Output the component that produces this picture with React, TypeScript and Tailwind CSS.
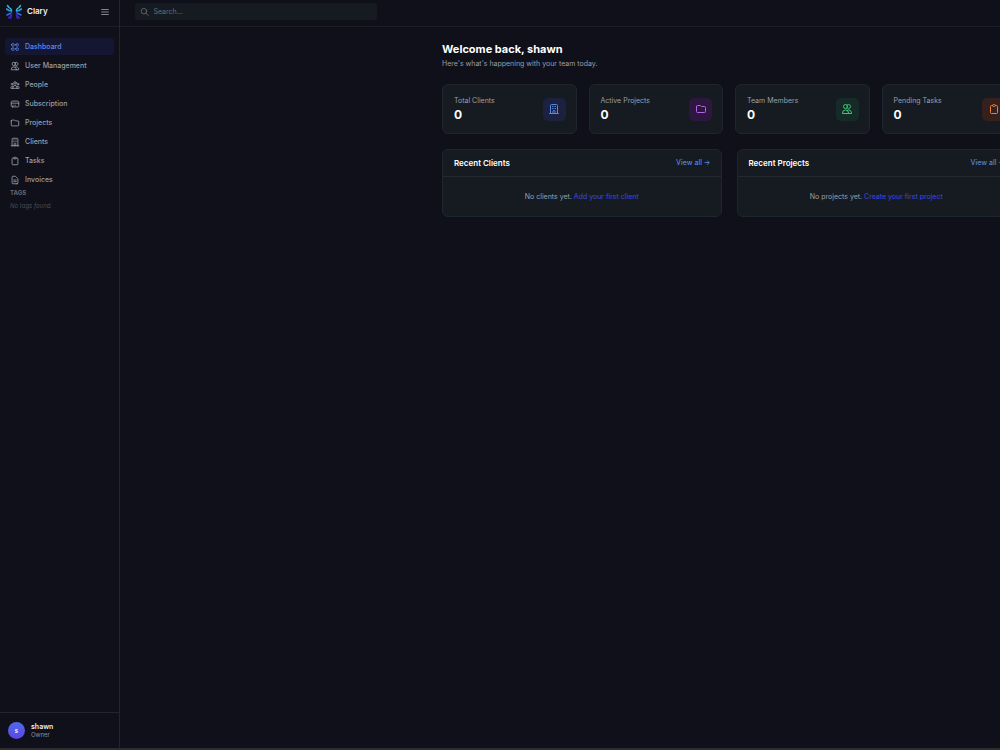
import type { ReactNode } from "react";
import type { IconType } from "react-icons";
import {
  HiOutlineClipboard,
  HiOutlineCreditCard,
  HiOutlineDocumentText,
  HiOutlineFolder,
  HiOutlineMenu,
  HiOutlineOfficeBuilding,
  HiOutlineSearch,
  HiOutlineUserGroup,
  HiOutlineUsers,
  HiOutlineViewGrid,
} from "react-icons/hi";

const navItems: { label: string; icon: IconType; active?: boolean }[] = [
  { label: "Dashboard", icon: HiOutlineViewGrid, active: true },
  { label: "User Management", icon: HiOutlineUsers },
  { label: "People", icon: HiOutlineUserGroup },
  { label: "Subscription", icon: HiOutlineCreditCard },
  { label: "Projects", icon: HiOutlineFolder },
  { label: "Clients", icon: HiOutlineOfficeBuilding },
  { label: "Tasks", icon: HiOutlineClipboard },
  { label: "Invoices", icon: HiOutlineDocumentText },
];

const stats: { label: string; value: number; icon: IconType; tone: string }[] = [
  {
    label: "Total Clients",
    value: 0,
    icon: HiOutlineOfficeBuilding,
    tone: "bg-[#1c2140] text-[#5688e0]",
  },
  {
    label: "Active Projects",
    value: 0,
    icon: HiOutlineFolder,
    tone: "bg-[#2d163f] text-[#b565e0]",
  },
  {
    label: "Team Members",
    value: 0,
    icon: HiOutlineUsers,
    tone: "bg-[#162b27] text-[#3fc67a]",
  },
  {
    label: "Pending Tasks",
    value: 0,
    icon: HiOutlineClipboard,
    tone: "bg-[#35201d] text-[#e5853a]",
  },
];

function Logo() {
  return (
    <svg className="h-4 w-4 shrink-0" viewBox="0 0 32 32" fill="none" aria-hidden="true">
      <g strokeWidth="3" strokeLinecap="round" strokeLinejoin="round">
        <path stroke="#35b8e0" d="M3 3l3 4 4 3 1 3M29 3l-3 4-4 3-1 3" />
        <path stroke="#2aa5dc" d="M1 10l5 3 5 1M31 10l-5 3-5 1" />
        <path stroke="#2f6fe6" d="M2 22l4-2 5-2M30 22l-4-2-5-2" />
        <path stroke="#3526c4" d="M5 28l4-4 2-5M9 29l2-6M27 28l-4-4-2-5M23 29l-2-6" />
      </g>
    </svg>
  );
}

function Sidebar() {
  return (
    <aside className="flex w-[120px] shrink-0 flex-col border-r border-[#23242d]">
      <div className="flex h-[27px] items-center border-b border-[#1d1e27] pb-[3px] pl-[6px] pr-[9px]">
        <Logo />
        <span className="ml-[5px] text-[8px] leading-[11px] font-semibold text-[#f0f1f4]">
          Clary
        </span>
        <button type="button" aria-label="Toggle menu" className="ml-auto text-[#9a9eaa]">
          <HiOutlineMenu className="h-[10px] w-[10px]" />
        </button>
      </div>
      <nav className="flex flex-col gap-[2px] px-[5px] pt-[11px]">
        {navItems.map(({ label, icon: Icon, active }) => (
          <a
            key={label}
            href="#"
            className={
              active
                ? "flex h-[17px] items-center gap-[5px] rounded-[3px] bg-[#151632] px-[5px] text-[7px] leading-[17px] font-medium text-[#5a8df0]"
                : "flex h-[17px] items-center gap-[5px] rounded-[3px] px-[5px] text-[7px] leading-[17px] font-medium text-[#9a9fab]"
            }
          >
            <Icon className="h-[10px] w-[10px]" />
            {label}
          </a>
        ))}
      </nav>
      <div className="px-[10px]">
        <h2 className="text-[6px] leading-[9px] font-bold text-[#646976]">TAGS</h2>
        <p className="mt-1 text-[6px] leading-[9px] text-[#474c58] italic">No tags found.</p>
      </div>
      <div className="mt-auto flex h-[36px] items-center gap-[6px] border-t border-[#23242d] px-2">
        <span className="flex h-[17px] w-[17px] items-center justify-center rounded-full bg-gradient-to-b from-[#4f68e8] to-[#5b45e5] text-[6px] font-semibold text-white">
          s
        </span>
        <div>
          <p className="text-[7px] leading-[8px] font-semibold text-[#eceef2]">shawn</p>
          <p className="text-[6px] leading-[8px] text-[#8b909c]">Owner</p>
        </div>
      </div>
    </aside>
  );
}

function Panel({ title, children }: { title: string; children: ReactNode }) {
  return (
    <section className="rounded-[6px] border border-[#1e262d] bg-[#161b21]">
      <div className="flex h-[27px] items-center justify-between border-b border-[#222930] pr-[10px] pl-[11px]">
        <h2 className="text-[8px] leading-[11px] font-semibold text-white">{title}</h2>
        <a href="#" className="text-[7px] leading-[10px] font-medium text-[#5585dc]">
          View all →
        </a>
      </div>
      <p className="py-[14px] text-center text-[7px] leading-[11px] text-[#9a9faa]">{children}</p>
    </section>
  );
}

export default function App() {
  return (
    <div className="flex h-screen flex-col overflow-hidden bg-[#0f1019] font-['Inter',sans-serif]">
      <div className="flex min-h-0 flex-1">
        <Sidebar />
        <div className="min-w-0 flex-1">
          <header className="flex h-[27px] items-center border-b border-[#1d1e27] pb-[3px] pl-[15px]">
            <label className="flex h-[17px] w-[242px] items-center gap-1 rounded-[3px] bg-[#161b21] px-[5px] text-[#6b717d]">
              <HiOutlineSearch className="h-[10px] w-[10px]" />
              <input
                type="search"
                aria-label="Search"
                placeholder="Search..."
                className="w-full bg-transparent text-[7px] leading-[17px] placeholder:text-[#666c78] focus:outline-none"
              />
            </label>
          </header>
          <main className="flex overflow-hidden pt-[15px] pl-[322px]">
            <div className="w-[574px] shrink-0">
              <h1 className="text-[11px] leading-[15px] font-bold text-white">
                Welcome back, shawn
              </h1>
              <p className="mt-[2px] text-[7px] leading-[10px] text-[#9a9faa]">
                Here's what's happening with your team today.
              </p>
              <div className="mt-[15px] grid grid-cols-4 gap-[12px]">
                {stats.map(({ label, value, icon: Icon, tone }) => (
                  <div
                    key={label}
                    className="flex h-[50px] items-center justify-between rounded-[6px] border border-[#1e262d] bg-[#161b21] pr-[10px] pl-[11px]"
                  >
                    <div>
                      <p className="text-[7px] leading-[10px] text-[#9a9faa]">{label}</p>
                      <p className="mt-px text-[12px] leading-[16px] font-bold text-white">
                        {value}
                      </p>
                    </div>
                    <span
                      className={`flex h-[23px] w-[23px] items-center justify-center rounded-[5px] ${tone}`}
                    >
                      <Icon className="h-[12px] w-[12px]" />
                    </span>
                  </div>
                ))}
              </div>
              <div className="mt-[15px] grid grid-cols-2 gap-[15px]">
                <Panel title="Recent Clients">
                  No clients yet.{" "}
                  <a href="#" className="text-[#3d47e8]">
                    Add your first client
                  </a>
                </Panel>
                <Panel title="Recent Projects">
                  No projects yet.{" "}
                  <a href="#" className="text-[#3d47e8]">
                    Create your first project
                  </a>
                </Panel>
              </div>
            </div>
          </main>
        </div>
      </div>
      <div className="h-[2px] bg-[#2b2d31]" />
    </div>
  );
}
